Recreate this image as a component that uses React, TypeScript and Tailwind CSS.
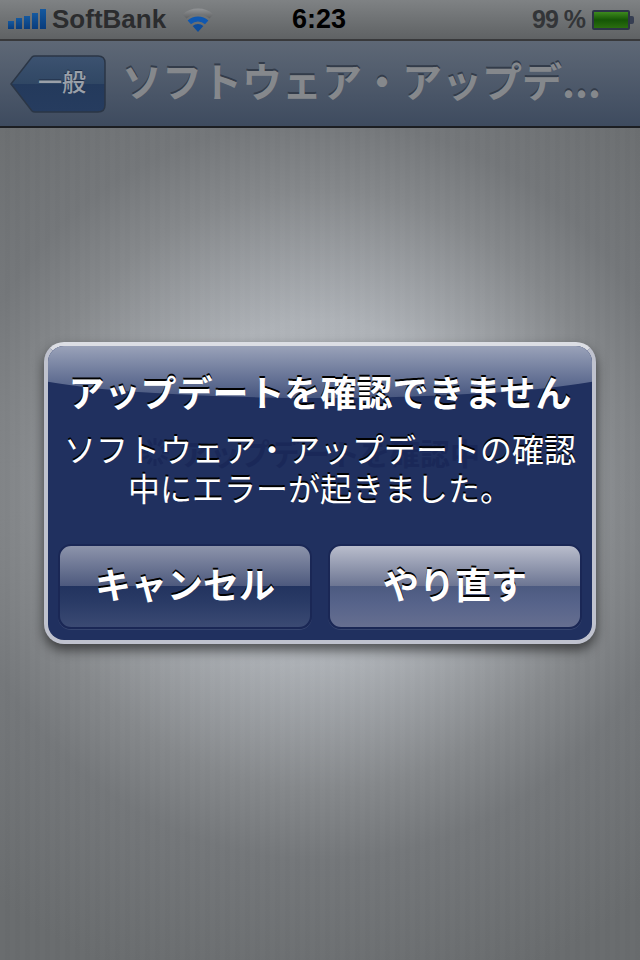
const JP = "font-['Noto_Sans_CJK_JP','Noto_Sans',sans-serif]";

const SignalBars = () => (
  <div className="flex items-end gap-[2px] w-[38px] h-[20px] mb-[1px]">
    {[8, 11, 13, 16, 20].map((h) => (
      <div key={h} className="w-[6px] bg-gradient-to-b from-[#15599f] to-[#093c7c]" style={{ height: h }} />
    ))}
  </div>
);

const WifiIcon = () => (
  <svg className="w-[34px] h-[26px] ml-[15px] mt-[1px]" viewBox="0 0 34 26">
    <defs>
      <linearGradient id="wifiGrey" x1="0" y1="0" x2="0" y2="1">
        <stop offset="0" stopColor="#929496" />
        <stop offset="1" stopColor="#5f6163" />
      </linearGradient>
    </defs>
    <path d="M1.500 7.400 A23.500 23.500 0 0 1 32.500 7.400 L28.500 11.600 A17.500 17.500 0 0 0 5.500 11.600 Z" fill="url(#wifiGrey)" />
    <path d="M6.600 13.500 A15.500 15.500 0 0 1 27.400 13.500 L24 17.200 A10.500 10.500 0 0 0 10 17.200 Z" fill="#1058b0" />
    <path d="M11.650 19.060 A8 8 0 0 1 22.350 19.060 L17 25 Z" fill="#0e4c9a" />
  </svg>
);

const Battery = () => (
  <div className="flex items-center">
    <div className="w-[38px] h-[20px] border-2 border-[#2c3446] rounded-[2px] bg-gradient-to-b from-[#3d8a1e] via-[#155606] to-[#2a6e10]" />
    <div className="w-[4px] h-[8px] bg-[#363e52] rounded-r-[2px]" />
  </div>
);

const StatusBar = () => (
  <div className="h-[39px] flex items-center pl-[8px] pr-[6px] bg-gradient-to-b from-[#7f8284] to-[#5f6264] border-b-2 border-[#38393b] relative box-content">
    <SignalBars />
    <span className="ml-[6px] text-[26px] font-bold text-[#2b2c2e] font-['Liberation_Sans',sans-serif]">SoftBank</span>
    <WifiIcon />
    <span className="absolute left-[292px] top-0 text-[27px] leading-[38px] font-bold text-black font-['Liberation_Sans',sans-serif]">6:23</span>
    <span className="ml-auto mr-[7px] text-[25px] font-bold text-[#333538] tracking-[-1px] font-['Liberation_Sans',sans-serif]">99 %</span>
    <Battery />
  </div>
);

const NavBar = () => (
  <div className="h-[85px] flex items-center pl-[10px] bg-gradient-to-b from-[#5e6876] to-[#3e4b5f] border-b-2 border-[#1c1e22] box-content">
    <div className={`relative w-[96px] h-[58px] flex items-center justify-center pl-[8px] pb-[6px] text-[24px] font-medium text-[#9aa0a9] [text-shadow:0_-1px_0_#1e2c44] ${JP}`}>
      <svg className="absolute inset-0" viewBox="0 0 96 58" fill="none">
        <defs>
          <linearGradient id="back" x1="0" y1="0" x2="0" y2="1">
            <stop offset="0" stopColor="#3c5270" />
            <stop offset="0.5" stopColor="#304764" />
            <stop offset="0.5" stopColor="#243a5c" />
            <stop offset="1" stopColor="#263c5f" />
          </linearGradient>
        </defs>
        <path d="M1 29 L22 2 Q23 1 25 1 H88 Q95 1 95 8 V50 Q95 57 88 57 H25 Q23 57 22 56 Z" fill="url(#back)" stroke="#2b3646" strokeWidth="1.5" />
      </svg>
      <span className="relative">一般</span>
    </div>
    <span className={`ml-[16px] mb-[8px] text-[40px] font-bold text-[#85888c] whitespace-nowrap [text-shadow:0_-2px_0_#333c4a] ${JP}`}>ソフトウェア・アップデ...</span>
  </div>
);

const Spinner = () => (
  <svg className="w-[30px] h-[30px] mr-[10px]" viewBox="-15 -15 30 30" stroke="#1a2858" strokeWidth="3">
    {[0, 30, 60, 90, 120, 150, 180, 210, 240, 270, 300, 330].map((a) => (
      <line key={a} x1="0" y1="-14" x2="0" y2="-7" transform={`rotate(${a})`} />
    ))}
  </svg>
);

export default function App() {
  return (
    <div className="relative w-[640px] h-[960px] overflow-hidden flex flex-col bg-[#6d7173]">
      <StatusBar />
      <NavBar />
      <div className="flex-1 flex justify-center pt-[214px] bg-[repeating-linear-gradient(90deg,rgba(255,255,255,0.008)_0px,rgba(255,255,255,0.008)_5px,rgba(0,0,0,0.008)_5px,rgba(0,0,0,0.008)_10px),radial-gradient(circle_at_50%_362px,#c2c6cb_0px,#aeb2b7_170px,#85888b_300px,#74777a_370px,#696c6e_520px)]">
        <div className={`relative w-[552px] h-[302px] rounded-[20px] border-[4px] border-[#bfc2ce] border-t-[#dcdee4] bg-[#20305f] overflow-hidden shadow-[0_6px_12px_rgba(0,0,0,0.55)] flex flex-col items-center text-white ${JP}`}>
          <div className="absolute left-[-40px] right-[-40px] top-0 h-[52px] rounded-b-[50%_32px] bg-gradient-to-b from-[#9aa2b9] to-[#47567f]" />
          <div className="absolute left-[92px] top-[91px] flex items-center text-[30px] leading-[30px] font-bold text-[#1a2858] whitespace-nowrap">
            <Spinner />
            アップデートを確認中
          </div>
          <h1 className="relative mt-[20px] text-[36px] leading-[50px] font-bold whitespace-nowrap [text-shadow:0_-2px_0_#000]">アップデートを確認できません</h1>
          <p className="relative mt-[13px] w-[520px] text-center text-[32px] leading-[39px] [text-shadow:0_-2px_0_#000]">
            ソフトウェア・アップデートの確認
            <br />
            中にエラーが起きました。
          </p>
          <div className="relative mt-auto mb-[11px] flex gap-[16px]">
            <button className="w-[254px] h-[85px] pb-[8px] rounded-[13px] border-2 border-[#1a2755] bg-[linear-gradient(180deg,#8d94ab_0%,#4e5a7e_49%,#22335f_49%,#2a3b66_70%,#3b4a73_100%)] text-[36px] font-bold [text-shadow:0_-2px_0_#000] shadow-[0_1px_0_rgba(255,255,255,0.1)]">
              キャンセル
            </button>
            <button className="w-[254px] h-[85px] pb-[8px] rounded-[13px] border-2 border-[#1a2755] bg-[linear-gradient(180deg,#b9bdcc_0%,#6d7693_49%,#4c5a80_49%,#56638a_70%,#666f90_100%)] text-[36px] font-bold [text-shadow:0_-2px_0_#000] shadow-[0_1px_0_rgba(255,255,255,0.1)]">
              やり直す
            </button>
          </div>
        </div>
      </div>
    </div>
  );
}
